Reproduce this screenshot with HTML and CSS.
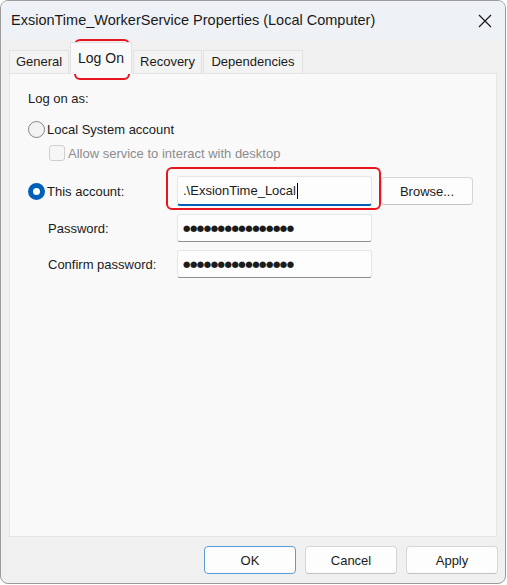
FILE: index.html
```html
<!DOCTYPE html>
<html lang="en">
<head>
    <meta charset="UTF-8">
    <meta name="viewport" content="width=device-width, initial-scale=1.0">
    <title>ExsionTime_WorkerService Properties (Local Computer)</title>
    <link rel="stylesheet" href="styles.css">
</head>
<body>

<div class="window">
    <div class="titlebar">
        <span class="title">ExsionTime_WorkerService Properties (Local Computer)</span>
        <svg class="close" width="14" height="14" viewBox="0 0 14 14">
            <path d="M1 1 L13 13 M13 1 L1 13" stroke="#1a1a1a" stroke-width="1.2" fill="none"/>
        </svg>
    </div>

    <div class="tabs">
        <div class="tab tab-general">General</div>
        <div class="tab tab-logon active">Log On</div>
        <div class="tab tab-recovery">Recovery</div>
        <div class="tab tab-deps">Dependencies</div>
    </div>

    <div class="panel">
        <div class="heading">Log on as:</div>

        <div class="option-row">
            <span class="radio"></span>
            <span>Local System account</span>
        </div>
        <div class="check-row">
            <span class="checkbox"></span>
            <span class="disabled">Allow service to interact with desktop</span>
        </div>

        <div class="field-row account-row">
            <div class="label option-label">
                <span class="radio checked"></span>
                <span>This account:</span>
            </div>
            <div class="input focused">.\ExsionTime_Local<span class="caret"></span></div>
            <button class="btn browse">Browse...</button>
        </div>
        <div class="field-row">
            <div class="label">Password:</div>
            <div class="input"><span class="dots">●●●●●●●●●●●●●●●●</span></div>
        </div>
        <div class="field-row">
            <div class="label">Confirm password:</div>
            <div class="input"><span class="dots">●●●●●●●●●●●●●●●●</span></div>
        </div>
    </div>

    <div class="footer">
        <button class="btn default">OK</button>
        <button class="btn">Cancel</button>
        <button class="btn">Apply</button>
    </div>

    <!-- red markers -->
    <div class="mark mark-tab"></div>
    <div class="mark mark-account"></div>
</div>

</body>
</html>
```

FILE: styles.css
```css
body {
    margin: 0;
    background-color: #fff;
    font-family: "Liberation Sans", Arial, sans-serif;
    font-size: 13px;
    color: #1b1b1b;
}
.window {
    position: relative;
    box-sizing: border-box;
    width: 506px;
    height: 584px;
    border: 1px solid #9c9c9c;
    border-radius: 8px;
    background-color: #f0f0f0;
    display: flex;
    flex-direction: column;
    overflow: hidden;
}
.titlebar {
    height: 39px;
    flex-shrink: 0;
    background-color: #eef2f6;
    display: flex;
    align-items: center;
    justify-content: space-between;
    padding: 0 13px 0 10px;
}
.title {
    font-size: 14.5px;
    color: #1a1a1a;
    padding-bottom: 1px;
}
.tabs {
    display: flex;
    align-items: flex-end;
    height: 33px;
    padding-left: 8px;
    flex-shrink: 0;
}
.tab {
    box-sizing: border-box;
    height: 23px;
    line-height: 22px;
    border: 1px solid #e2e2e2;
    border-bottom: none;
    background-color: #f3f3f3;
    margin-right: 1px;
    font-size: 13px;
    text-align: center;
    white-space: nowrap;
}
.tab-general { width: 60px; }
.tab-logon { width: 62px; }
.tab-recovery { width: 69px; }
.tab-deps { width: 100px; }
.tab.active {
    height: 32px;
    line-height: 30px;
    background-color: #f9f9f9;
    font-size: 14px;
    margin-bottom: -1px;
    position: relative;
    z-index: 1;
}
.panel {
    flex: 1;
    margin: 0 8px;
    background-color: #f9f9f9;
    border: 1px solid #e4e4e4;
    padding: 0 18px;
}
.heading {
    margin-top: 16px;
    line-height: 18px;
}
.option-row, .option-label {
    display: flex;
    align-items: center;
    gap: 2px;
}
.option-row {
    margin-top: 11px;
    height: 20px;
}
.check-row {
    display: flex;
    align-items: center;
    gap: 3px;
    height: 20px;
    margin-top: 4px;
    padding-left: 21px;
}
.disabled {
    color: #8c8c8c;
}
.radio {
    box-sizing: border-box;
    width: 17px;
    height: 17px;
    border-radius: 50%;
    border: 1px solid #858585;
    background-color: #f3f3f3;
    flex-shrink: 0;
}
.radio.checked {
    border: 5px solid #005fb8;
    background-color: #fff;
}
.checkbox {
    box-sizing: border-box;
    width: 16px;
    height: 16px;
    border-radius: 3px;
    border: 1px solid #cfcfcf;
    background-color: #f6f6f6;
}
.field-row {
    display: flex;
    align-items: center;
    margin-top: 8px;
}
.account-row {
    margin-top: 13px;
}
.label {
    width: 149px;
    padding-left: 20px;
    box-sizing: border-box;
}
.option-label {
    padding-left: 0;
}
.input {
    box-sizing: border-box;
    width: 195px;
    height: 28px;
    background-color: #fdfdfd;
    border: 1px solid #e6e6e6;
    border-bottom: 1px solid #8d8d8d;
    border-radius: 3px;
    padding-left: 5px;
    display: flex;
    align-items: center;
}
.input.focused {
    height: 30px;
    border-bottom: 2px solid #005fb8;
}
.caret {
    display: inline-block;
    width: 1px;
    height: 16px;
    background-color: #000;
    margin-left: 1px;
}
.dots {
    font-family: "DejaVu Sans", sans-serif;
    font-size: 8.5px;
    letter-spacing: -0.5px;
}
.btn {
    box-sizing: border-box;
    width: 92px;
    height: 28px;
    background-color: #fdfdfd;
    border: 1px solid #d6d6d6;
    border-bottom-color: #c2c2c2;
    border-radius: 4px;
    font-family: inherit;
    font-size: 13px;
    color: #1b1b1b;
    padding: 0;
}
.browse {
    width: 92px;
    margin-left: 9px;
}
.footer {
    height: 46px;
    flex-shrink: 0;
    display: flex;
    justify-content: flex-end;
    align-items: center;
    gap: 9px;
    padding-right: 7px;
}
.btn.default {
    border-color: #5e9ad6;
}
.mark {
    position: absolute;
    border: 2px solid #e8141e;
    border-radius: 6px;
}
.mark-tab {
    left: 73px;
    top: 38px;
    width: 52px;
    height: 37px;
}
.mark-account {
    left: 165px;
    top: 166px;
    width: 211px;
    height: 39px;
}
```
